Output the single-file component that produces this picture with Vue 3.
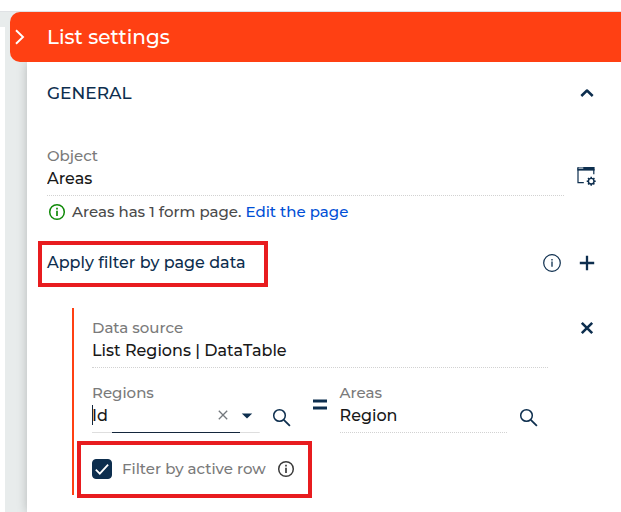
<script setup>
import { ref } from 'vue'

const objectName = ref('Areas')
const dataSource = ref('List Regions | DataTable')
const sourceColumn = ref('Id')
const targetColumn = ref('Region')
const activeRow = ref(true)
const expanded = ref(true)
</script>

<template>
  <div class="page">
    <div class="topline"></div>
    <div class="workspace">
      <div class="canvas"></div>
      <aside class="drawer">
        <header class="drawer-header">
          <button class="icon-btn collapse" type="button" aria-label="Collapse">
            <svg width="12" height="18" viewBox="0 0 12 18"><path d="M2 2.2 9 9 2 15.8" fill="none" stroke="#fff" stroke-width="1.9" /></svg>
          </button>
          <h1>List settings</h1>
        </header>
        <div class="drawer-body">
          <div class="row section">
            <h2>GENERAL</h2>
            <button class="icon-btn" type="button" aria-label="Toggle section" @click="expanded = !expanded">
              <svg width="20" height="20" viewBox="0 0 20 20"><path d="M4.3 13 10 7.5l5.7 5.5" fill="none" stroke="#0d2e4e" stroke-width="2.5" stroke-linejoin="round" /></svg>
            </button>
          </div>

          <template v-if="expanded">
            <div class="row object-row">
              <div class="field">
                <label for="object">Object</label>
                <input id="object" v-model="objectName" type="text">
              </div>
              <button class="icon-btn" type="button" aria-label="Object settings">
                <svg width="20" height="20" viewBox="0 0 20 20" fill="none" stroke="#0d2e4e">
                  <path d="M1 2v14.7h5.8M16.8 3v5.2" stroke-width="1.2" />
                  <path d="M.4 1h17.2v3.6H.4z" fill="#0d2e4e" stroke="none" />
                  <path d="M1.5 2.1h4.8" stroke="#bdc6cf" stroke-width="1.4" />
                  <circle cx="14.2" cy="15.2" r="2.8" stroke-width="1.4" />
                  <path d="M14.2 10.7v1.7M14.2 18v1.7M9.7 15.2h1.7M17 15.2h1.7M11 12l1.2 1.2M16.2 17.2l1.2 1.2M17.4 12l-1.2 1.2M12.2 17.2 11 18.4" stroke-width="1.5" />
                </svg>
              </button>
            </div>

            <p class="hint">
              <svg width="18" height="18" viewBox="0 0 18 18"><circle cx="9" cy="9" r="7.3" fill="none" stroke="#108a08" stroke-width="1.5" /><path d="M9 7.8v5.1M9 4.8v1.8" stroke="#108a08" stroke-width="1.7" /></svg>
              <span>Areas has 1 form page. <a href="#edit">Edit the page</a></span>
            </p>

            <div class="row filter-row">
              <h3 class="marked">Apply filter by page data</h3>
              <span class="actions">
                <button class="icon-btn" type="button" aria-label="About page data filters">
                  <svg width="20" height="20" viewBox="0 0 20 20"><circle cx="10" cy="10" r="8.3" fill="none" stroke="#0d2e4e" stroke-width="1.2" /><path d="M10 8.6v5.1M10 6v1.4" stroke="#0d2e4e" stroke-width="1.3" /></svg>
                </button>
                <button class="icon-btn" type="button" aria-label="Add filter">
                  <svg width="20" height="20" viewBox="0 0 20 20"><path d="M10 2.8v14.4M2.8 10h14.4" stroke="#0d2e4e" stroke-width="2.3" /></svg>
                </button>
              </span>
            </div>

            <section class="group">
              <div class="row source-row">
                <div class="field">
                  <label for="source">Data source</label>
                  <input id="source" v-model="dataSource" type="text">
                </div>
                <button class="icon-btn" type="button" aria-label="Remove filter">
                  <svg width="20" height="20" viewBox="0 0 20 20"><path d="m4.8 4.8 10.4 10.4m0-10.4L4.8 15.2" stroke="#0d2e4e" stroke-width="2.6" /></svg>
                </button>
              </div>

              <div class="columns">
                <div class="field active">
                  <label for="regions">Regions</label>
                  <div class="combo">
                    <input id="regions" v-model="sourceColumn" type="text">
                    <button class="icon-btn" type="button" aria-label="Clear" @click="sourceColumn = ''">
                      <svg width="12" height="12" viewBox="0 0 12 12"><path d="m1.8 1.8 8.4 8.4m0-8.4-8.4 8.4" stroke="#73787d" stroke-width="1.3" /></svg>
                    </button>
                    <button class="icon-btn" type="button" aria-label="Open list">
                      <svg width="12" height="12" viewBox="0 0 12 12"><path d="M.8 4.5h10.4L6 9.5z" fill="#0d2e4e" /></svg>
                    </button>
                  </div>
                </div>
                <button class="icon-btn search" type="button" aria-label="Search regions">
                  <svg width="20" height="20" viewBox="0 0 20 20"><circle cx="7.5" cy="7.5" r="5.8" fill="none" stroke="#0d2e4e" stroke-width="1.5" /><path d="m11.8 11.8 6.1 6.1" stroke="#0d2e4e" stroke-width="1.8" /></svg>
                </button>
                <svg class="equals" width="16" height="12" viewBox="0 0 16 12"><path d="M1 2h14M1 9h14" stroke="#0d2e4e" stroke-width="3" /></svg>
                <div class="field">
                  <label for="areas">Areas</label>
                  <input id="areas" v-model="targetColumn" type="text">
                </div>
                <button class="icon-btn search" type="button" aria-label="Search areas">
                  <svg width="20" height="20" viewBox="0 0 20 20"><circle cx="7.5" cy="7.5" r="5.8" fill="none" stroke="#0d2e4e" stroke-width="1.5" /><path d="m11.8 11.8 6.1 6.1" stroke="#0d2e4e" stroke-width="1.8" /></svg>
                </button>
              </div>

              <div class="check-row marked">
                <input id="active-row" v-model="activeRow" type="checkbox">
                <svg class="tick" width="20" height="20" viewBox="0 0 20 20"><path d="m3.8 10.7 4 4 8.3-9" fill="none" stroke="#fff" stroke-width="1.8" /></svg>
                <label for="active-row">Filter by active row</label>
                <button class="icon-btn" type="button" aria-label="About active row">
                  <svg width="18" height="18" viewBox="0 0 18 18"><circle cx="9" cy="9" r="7.3" fill="none" stroke="#3c3c3c" stroke-width="1.5" /><path d="M9 7.8v5.1M9 4.8v1.8" stroke="#3c3c3c" stroke-width="1.7" /></svg>
                </button>
              </div>
            </section>
          </template>
        </div>
      </aside>
    </div>
  </div>
</template>

<style>
body {
  background: #fff;
}
</style>

<style scoped>
.page {
  display: flex;
  flex-direction: column;
  min-height: 100vh;
  overflow: hidden;
  font-family: Montserrat, Inter, "Open Sans", sans-serif;
  font-size: 16px;
  font-weight: 500;
  color: #181818;
}
.page * {
  box-sizing: border-box;
}
.topline {
  height: 12px;
  border-bottom: 1px solid #e0e2e5;
}
.workspace {
  display: flex;
  flex: 1;
  background: #e8ecec;
}
.canvas {
  width: 5px;
  margin-top: 15px;
  background: #fff;
}
.drawer {
  display: flex;
  flex: 1;
  flex-direction: column;
  min-width: 0;
  padding-left: 5px;
}
.drawer-header {
  display: flex;
  align-items: center;
  gap: 21px;
  height: 50px;
  padding-left: 4px;
  border-radius: 10px 0 0 10px;
  background: #ff4013;
  color: #fff;
  z-index: 1;
}
h1, h2, h3, p {
  margin: 0;
  font-weight: 500;
}
h1 {
  font-size: 20px;
  line-height: 24px;
}
h2, h3 {
  font-size: 17px;
  line-height: 24px;
  color: #0d2e4e;
}
h3 {
  font-size: 16px;
}
.drawer-body {
  flex: 1;
  margin-left: 17px;
  padding: 11px 24px 16px 20px;
  background: #fff;
  box-shadow: 0 0 10px rgba(0, 0, 0, 0.22);
}
.row {
  display: flex;
  align-items: center;
  justify-content: space-between;
}
.icon-btn {
  display: flex;
  flex: none;
  padding: 0;
  border: 0;
  background: none;
  cursor: pointer;
}
.section {
  height: 40px;
}
.object-row {
  gap: 13px;
  margin-top: 33px;
}
.object-row .icon-btn {
  padding-top: 10px;
}
.field {
  flex: 1;
  min-width: 0;
  padding-bottom: 5px;
  border-bottom: 1px dotted #d2d2d2;
}
.field label {
  display: block;
  font-size: 15px;
  line-height: 20px;
  color: #7a7a7a;
}
.field input {
  display: block;
  width: 100%;
  min-width: 0;
  height: 24px;
  padding: 0;
  border: 0;
  outline: 0;
  background: none;
  color: inherit;
  font: inherit;
}
.hint {
  display: flex;
  align-items: center;
  gap: 6px;
  margin-top: 6px;
  padding-left: 1px;
  font-size: 15px;
  line-height: 20px;
  color: #4a4a4a;
}
.hint a {
  color: #004fd6;
  text-decoration: none;
}
.marked {
  position: relative;
}
.marked::after {
  content: "";
  position: absolute;
  inset: -10px -22px -12px -9px;
  border: 4px solid #e81c1f;
  pointer-events: none;
}
.filter-row {
  height: 46px;
  margin-top: 18px;
}
.actions {
  display: flex;
  gap: 15px;
}
.group {
  margin: 22px 0 0 25px;
  padding: 10px 0 16px 18px;
  border-left: 2px solid #ff4013;
}
.source-row {
  align-items: flex-start;
  gap: 29px;
}
.columns {
  display: flex;
  align-items: flex-start;
  gap: 12px;
  margin-top: 15px;
  padding-right: 58px;
}
.search {
  padding-top: 25px;
}
.equals {
  flex: none;
  margin: 16px 0 0 8px;
}
.field.active {
  border-bottom: 0;
  padding-bottom: 6px;
  background: linear-gradient(90deg, #dedede 20px, #14273c 20px, #14273c calc(100% - 20px), #dedede calc(100% - 20px)) bottom / 100% 1px no-repeat;
}
.combo {
  display: flex;
  position: relative;
  align-items: center;
  gap: 12px;
  padding-right: 7px;
}
.combo::before {
  content: "";
  position: absolute;
  left: 0;
  width: 1px;
  height: 20px;
  background: #14273c;
}
.check-row {
  display: flex;
  align-items: center;
  width: max-content;
  height: 20px;
  margin-top: 26px;
}
.check-row.marked::after {
  inset: -18px -17px -19px -15px;
}
.check-row input {
  width: 20px;
  height: 20px;
  margin: 0;
  appearance: none;
  border: 1px solid #0d2e4e;
  border-radius: 4px;
}
.check-row input:checked {
  background: #0d2e4e;
}
.tick {
  position: absolute;
  left: 0;
  pointer-events: none;
}
.check-row label {
  margin: 0 11px 0 10px;
  font-size: 15px;
  line-height: 20px;
  color: #7a7a7a;
}
</style>
